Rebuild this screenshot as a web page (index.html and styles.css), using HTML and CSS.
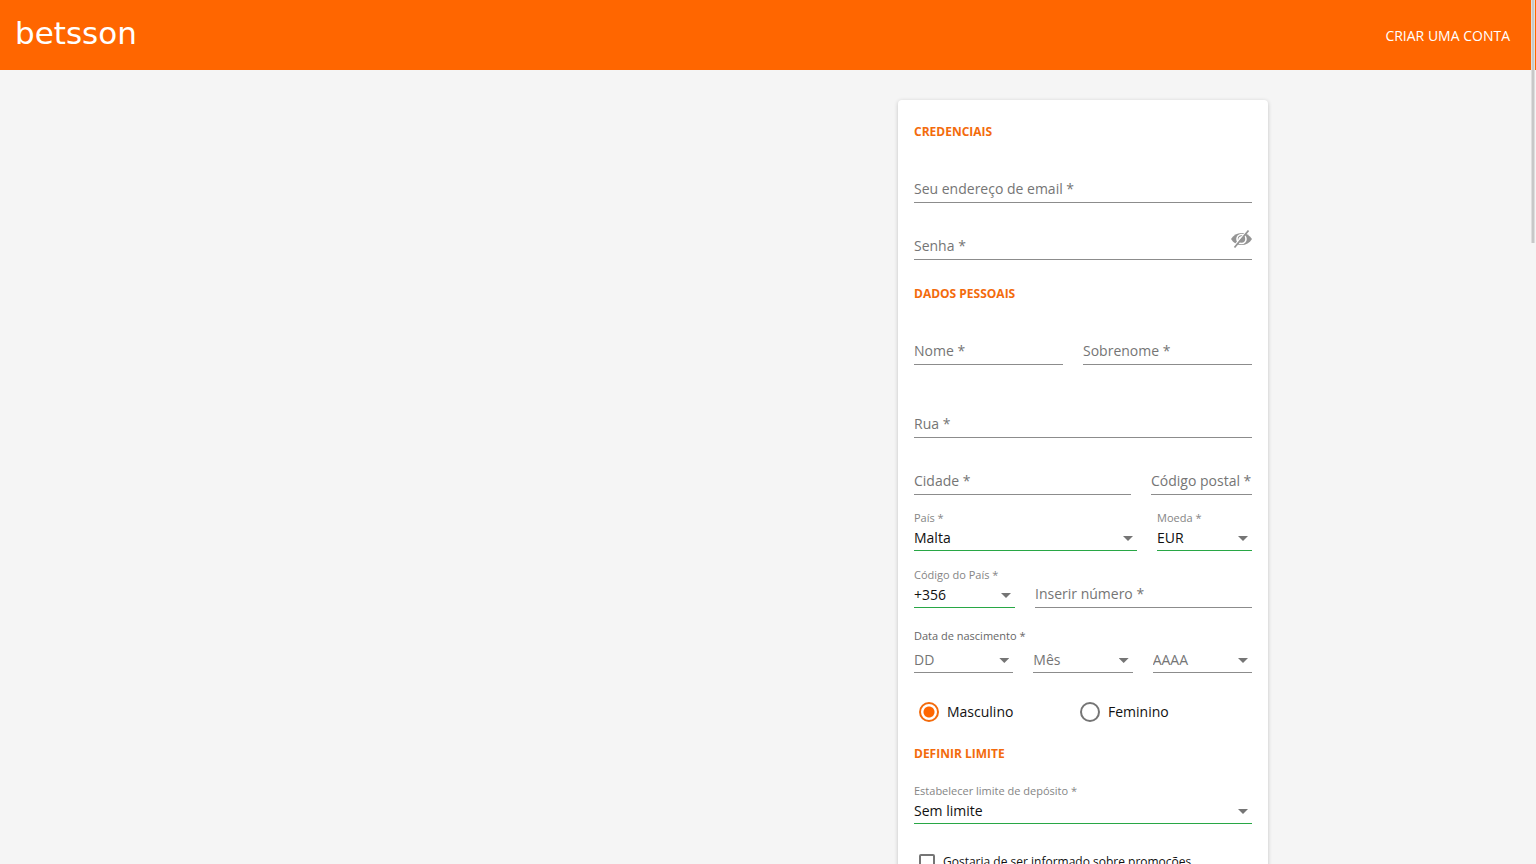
FILE: index.html
```html
<!DOCTYPE html>
<html lang="pt">
<head>
<meta charset="utf-8">
<meta name="viewport" content="width=device-width, initial-scale=1">
<title>betsson</title>
<link rel="stylesheet" href="styles.css">
</head>
<body>
<header class="topbar">
  <a class="logo" href="#">betsson</a>
  <a class="create" href="#">CRIAR UMA CONTA</a>
</header>
<main class="page">
  <form class="card">
    <h2 class="title">CREDENCIAIS</h2>
    <div class="row after-title">
      <input class="text" type="email" aria-label="Seu endereço de email" placeholder="Seu endereço de email *">
    </div>
    <div class="row gap-l password">
      <input class="text" type="password" aria-label="Senha" placeholder="Senha *">
      <button class="eye" type="button" aria-label="Mostrar senha">
        <svg width="22" height="20" viewBox="0 0 22 20" fill="none">
          <path d="M1 10C3.500 6 7 4 11.500 4S19.500 6 22 10C19.500 14 16 16 11.500 16S3.500 14 1 10Z" fill="#949494"/>
          <circle cx="11.500" cy="10" r="4.500" fill="#949494" stroke="#fff" stroke-width="1.600"/>
          <path d="M9 11C9 9 10 8 12 8" stroke="#fff" stroke-width="1.500"/>
          <path d="M17 2 4 17" stroke="#fff" stroke-width="1.300"/>
          <path d="M18.500 1.500 4.500 18.500" stroke="#949494" stroke-width="1.800"/>
        </svg>
      </button>
    </div>

    <h2 class="title next">DADOS PESSOAIS</h2>
    <div class="row after-title names">
      <input class="text" type="text" aria-label="Nome" placeholder="Nome *">
      <input class="text" type="text" aria-label="Sobrenome" placeholder="Sobrenome *">
    </div>
    <div class="row gap-xl">
      <input class="text" type="text" aria-label="Rua" placeholder="Rua *">
    </div>
    <div class="row gap-l city">
      <input class="text" type="text" aria-label="Cidade" placeholder="Cidade *">
      <input class="text" type="text" aria-label="Código postal" placeholder="Código postal *">
    </div>
    <div class="row gap-s country">
      <div class="field">
        <label class="label" for="country">País *</label>
        <div class="pick"><select class="select valid" id="country"><option>Malta</option></select><span class="arrow"></span></div>
      </div>
      <div class="field">
        <label class="label" for="currency">Moeda *</label>
        <div class="pick"><select class="select valid" id="currency"><option>EUR</option></select><span class="arrow"></span></div>
      </div>
    </div>
    <div class="row gap-m phone">
      <div class="field">
        <label class="label" for="prefix">Código do País *</label>
        <div class="pick"><select class="select valid" id="prefix"><option>+356</option></select><span class="arrow"></span></div>
      </div>
      <input class="text" type="tel" aria-label="Inserir número" placeholder="Inserir número *">
    </div>
    <fieldset class="birth">
      <legend class="label dark">Data de nascimento *</legend>
      <div class="row thirds">
        <div class="pick"><select class="select" aria-label="Dia"><option>DD</option></select><span class="arrow"></span></div>
        <div class="pick"><select class="select" aria-label="Mês"><option>Mês</option></select><span class="arrow"></span></div>
        <div class="pick"><select class="select" aria-label="Ano"><option>AAAA</option></select><span class="arrow"></span></div>
      </div>
    </fieldset>
    <div class="gender" role="radiogroup" aria-label="Sexo">
      <label class="choice"><input class="radio" type="radio" name="gender" checked>Masculino</label>
      <label class="choice"><input class="radio" type="radio" name="gender">Feminino</label>
    </div>

    <h2 class="title last">DEFINIR LIMITE</h2>
    <div class="row limit">
      <div class="field">
        <label class="label" for="deposit">Estabelecer limite de depósito *</label>
        <div class="pick"><select class="select valid" id="deposit"><option>Sem limite</option></select><span class="arrow"></span></div>
      </div>
    </div>
    <label class="choice promo"><input class="check" type="checkbox">Gostaria de ser informado sobre promoções</label>
  </form>
</main>
<div class="thumb"></div>
</body>
</html>
```
FILE: styles.css
```css
* { box-sizing: border-box; }

body {
  margin: 0;
  height: 100vh;
  display: flex;
  flex-direction: column;
  overflow: hidden;
  background: #f5f5f5;
  color: #111;
  font: 14px/20px "Open Sans", sans-serif;
}

input, select, button { font: inherit; color: inherit; margin: 0; padding: 0; border: 0; border-radius: 0; background: none; outline: 0; }

.topbar {
  flex: none;
  height: 70px;
  display: flex;
  justify-content: space-between;
  padding: 16px 26px 0 15px;
  background: #f60;
}

.topbar a { color: #fff; text-decoration: none; }
.logo { font: 31px/34px "DejaVu Sans", sans-serif; }
.create { line-height: 40px; }

.page {
  flex: 1;
  min-height: 0;
  overflow-y: auto;
  scrollbar-width: none;
  padding: 30px 16px;
}

.card {
  width: 370px;
  max-width: 100%;
  margin-left: auto;
  margin-right: max(0px, calc(50vw - 516px));
  padding: 24px 16px;
  background: #fff;
  border-radius: 4px;
  box-shadow: 0 1px 4px rgba(0, 0, 0, .2);
}

.title { margin: 0; font-size: 12px; line-height: 16px; font-weight: 700; color: #f36b0c; }
.title.next { margin-top: 26px; }
.title.last { margin-top: 24px; }

.row { display: grid; column-gap: 20px; align-items: end; }
.after-title { margin-top: 35px; }
.gap-s { margin-top: 15px; }
.gap-m { margin-top: 16px; }
.gap-l { margin-top: 29px; }
.gap-xl { margin-top: 45px; }
.row.limit { margin-top: 21px; }
.names { grid-template-columns: 149fr 169fr; }
.city { grid-template-columns: 1fr 101px; }
.country { grid-template-columns: 1fr 95px; }
.phone { grid-template-columns: 101px 1fr; }
.thirds { grid-template-columns: repeat(3, 1fr); }

.text { width: 100%; min-width: 0; height: 28px; border-bottom: 1px solid #8c8c8c; }
.text::placeholder { color: #757575; opacity: 1; }

.password { position: relative; }
.eye { position: absolute; right: 0; bottom: 11px; width: 22px; height: 20px; cursor: pointer; }
.eye svg { display: block; }

.label { display: block; font-size: 11px; line-height: 16px; color: #858585; }
.label.dark { padding: 0; color: #666; }

.pick { display: grid; align-items: center; }
.pick > * { grid-area: 1 / 1; }
.select { appearance: none; width: 100%; height: 25px; border-bottom: 1px solid #8c8c8c; color: #757575; }
.select.valid { border-bottom-color: #28a745; color: #111; }
.arrow { justify-self: end; margin-right: 4px; width: 10px; height: 5px; background: #757575; clip-path: polygon(0 0, 100% 0, 50% 100%); pointer-events: none; }

.birth { min-width: 0; margin: 20px 0 0; padding: 4px 0 0; border: 0; }

.gender { display: grid; grid-template-columns: 1fr 1fr; margin-top: 29px; padding: 0 11px 0 5px; }
.choice { display: flex; align-items: center; gap: 8px; }
.radio { appearance: none; width: 20px; height: 20px; border: 2px solid #757575; border-radius: 50%; }
.radio:checked { border-color: #f36b0c; background: radial-gradient(circle, #f60 5px, transparent 6px); }

.promo { margin-top: 28px; padding-left: 5px; font-size: 12px; }
.check { appearance: none; width: 16px; height: 16px; border: 2px solid #757575; border-radius: 2px; }

.thumb { position: fixed; top: 0; right: 1px; width: 4px; height: 243px; background: #c8c8c8; border: solid #dedede; border-width: 0 1px; }
```
